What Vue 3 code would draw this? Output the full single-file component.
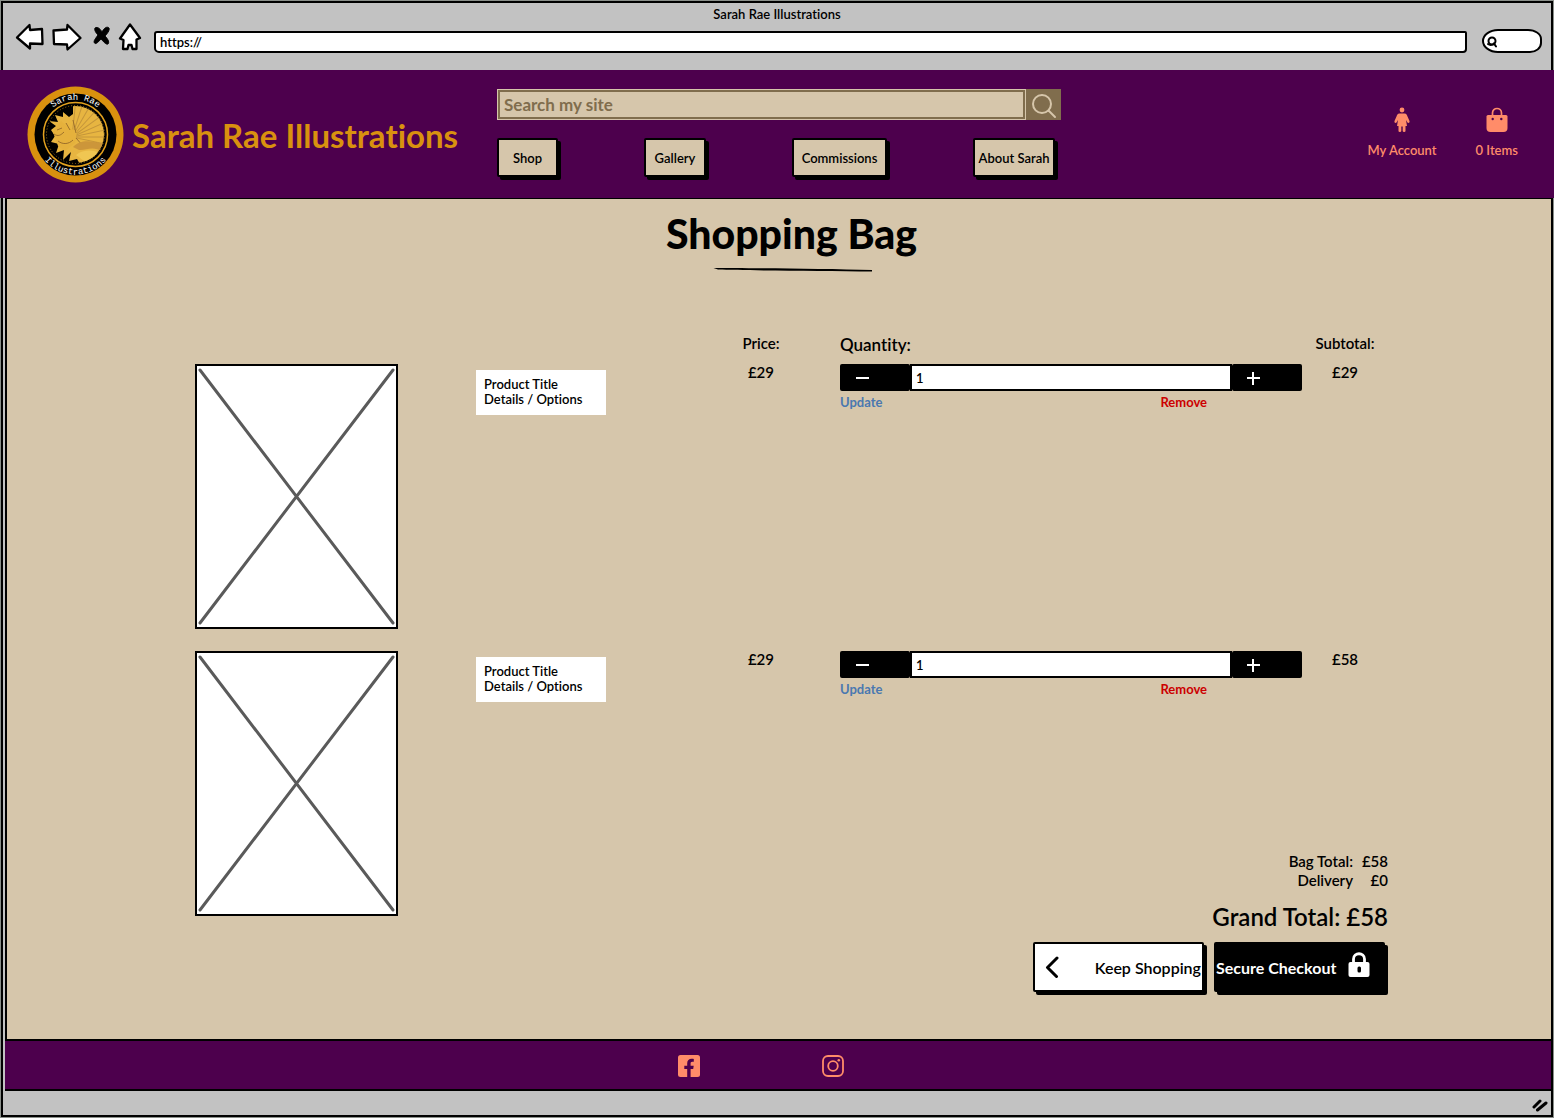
<script setup>
import { ref } from 'vue'

const links = [
  { label: 'Shop', width: 61 },
  { label: 'Gallery', width: 62 },
  { label: 'Commissions', width: 95 },
  { label: 'About Sarah', width: 82 }
]

const items = ref([
  { id: 1, price: '£29', quantity: 1, subtotal: '£29' },
  { id: 2, price: '£29', quantity: 1, subtotal: '£58' }
])

const feathers = [-84, -72, -60, -48, -36, -24, -12, 0, 12]
</script>

<template>
  <div class="window">
    <div class="chrome">
      <div class="tab-title">Sarah Rae Illustrations</div>
      <div class="toolbar">
        <svg class="controls" width="128" height="30" viewBox="0 0 128 30" aria-hidden="true">
          <g fill="#fff" stroke="#000" stroke-width="2.300" stroke-linejoin="round">
            <path d="M2 14.500 L14.500 2 L15 7 L27 6 L27.500 21 L15 20.500 L15 25.500 Z" />
            <path d="M38.500 7.500 L52 6.500 L52.500 2 L65.500 15 L52.500 26.500 L52 21.500 L39 21 Z" />
            <path d="M115 1.500 L125 15 L121.500 16.500 L121.500 26 L117.500 26 L116.500 22 L113.500 22 L112.500 26 L108 26 L108.500 17 L105 15.500 Z" />
          </g>
          <g fill="#000" stroke="#000" stroke-width="1" stroke-linejoin="round">
            <path d="M80 5 C83 3 86 7 87 9 C89 5 92 3 94 5 C95 7 92 11 90 13 C92 15 95 19 93 21 C91 22 88 18 86 16 C84 18 81 22 79.500 20 C78 18 81 15 83 12 C81 10 79 7 80 5 Z" />
          </g>
        </svg>
        <input class="address" type="text" value="https://" aria-label="Address" />
        <label class="finder">
          <svg width="12" height="14" viewBox="0 0 12 14" fill="none" stroke="#000" stroke-width="2" stroke-linecap="round" aria-hidden="true">
            <circle cx="6" cy="5" r="3.500" /><path d="M2 8 C4 9.500 7 9 8 7.500 L10 10.500" />
          </svg>
          <input type="text" aria-label="Browser search" />
        </label>
      </div>
    </div>

    <header class="site-header">
      <a class="brand" href="#">
        <svg width="97" height="97" viewBox="0 0 97 97" aria-hidden="true">
          <defs>
            <path id="arc-top" d="M13.500 48.500 A35 35 0 0 1 83.500 48.500" />
            <path id="arc-bottom" d="M8.500 48.500 A40 40 0 0 0 88.500 48.500" />
            <clipPath id="medal"><circle cx="48.500" cy="48.500" r="28.500" /></clipPath>
          </defs>
          <circle cx="48.500" cy="48.500" r="48" fill="#d9910f" />
          <circle cx="48.500" cy="48.500" r="41" fill="#000" />
          <circle cx="48.500" cy="48.500" r="32" fill="none" stroke="#e3a21e" stroke-width="1.500" />
          <circle cx="48.500" cy="48.500" r="29" fill="none" stroke="#a17618" stroke-width="1" stroke-dasharray="1 2" />
          <g clip-path="url(#medal)">
            <path d="M46 18 H80 V80 H54 L50 73 L42 75 L44 66 L36 74 L37 64 L29 67 L32 58 L24 56 L28 50 L24 44 L29 40 L22 35 L31 36 L28 29 L36 31 L36 26 L42 31 L46 28 L46 34 Z" fill="#e7b541" />
            <path v-for="angle in feathers" :key="angle" d="M45 51 L84 51" :transform="`rotate(${angle} 45 51)`" stroke="#c4953a" stroke-width="1" />
            <path d="M26 46 L34 35 L42 42 L50 45 L48 57 L38 65 L31 60 Z" fill="#e5b13c" />
            <path d="M27 48 C31 51 34 49 37 46 M30 44 L35 42 M31 55 C36 59 42 58 46 54 M39 37 L43 44 M46 34 L49 47 M49 52 L56 60 L70 57" fill="none" stroke="#9d702b" stroke-width="1" />
            <path d="M46 61 C55 52 66 56 78 58 L76 66 C65 59 59 65 52 64 Z" fill="#cc963a" />
            <path d="M49 69 C57 63 66 64 73 67 L61 78 Z" fill="#f0c652" />
          </g>
          <text class="seal"><textPath href="#arc-top" startOffset="50%" text-anchor="middle">Sarah Rae</textPath></text>
          <text class="seal"><textPath href="#arc-bottom" startOffset="50%" text-anchor="middle">Illustrations</textPath></text>
        </svg>
        <span>Sarah Rae Illustrations</span>
      </a>

      <div class="middle">
        <form class="search" role="search" @submit.prevent>
          <input type="search" placeholder="Search my site" aria-label="Search my site" />
          <button type="submit" aria-label="Search">
            <svg width="28" height="28" viewBox="0 0 28 28" fill="none" stroke="#d6c6ab" stroke-width="2" stroke-linecap="round" aria-hidden="true">
              <circle cx="12" cy="12" r="9" /><path d="M18.500 18.500 L25 25" />
            </svg>
          </button>
        </form>
        <nav>
          <button v-for="link in links" :key="link.label" type="button" :style="{ width: link.width + 'px' }">{{ link.label }}</button>
        </nav>
      </div>

      <div class="account">
        <a href="#">
          <svg width="24" height="26" viewBox="0 0 24 26" fill="#ff8c69" aria-hidden="true">
            <circle cx="12" cy="3" r="2.400" />
            <path d="M9.500 6.500 H14.500 C16.500 6.500 17 8 17.500 9.500 L19.500 14 C20 16 18 16.500 17.300 15.200 L16 13 L17 19 H15.500 V24 Q15.500 25 14.200 25 Q12.700 25 12.700 24 V19.500 H11.300 V24 Q11.300 25 9.800 25 Q8.500 25 8.500 24 V19 H7 L8 13 L6.700 15.200 C6 16.500 4 16 4.500 14 L6.500 9.500 C7 8 7.500 6.500 9.500 6.500 Z" />
          </svg>
          <span>My Account</span>
        </a>
        <a href="#">
          <svg width="24" height="26" viewBox="0 0 24 26" aria-hidden="true">
            <path d="M7.500 9 V6 C7.500 0 16.500 0 16.500 6 V9" fill="none" stroke="#ff8c69" stroke-width="1.700" />
            <path d="M3 8 H21 Q22.500 8 22.500 9.500 V21 Q22.500 25 18.500 25 H5.500 Q1.500 25 1.500 21 V9.500 Q1.500 8 3 8 Z" fill="#ff8c69" />
            <circle cx="7.700" cy="12" r="1.200" fill="#4d004d" /><circle cx="16.300" cy="12" r="1.200" fill="#4d004d" />
          </svg>
          <span>0 Items</span>
        </a>
      </div>
    </header>

    <main>
      <h1>Shopping Bag</h1>
      <svg class="rule" width="160" height="5" viewBox="0 0 160 5" aria-hidden="true">
        <path d="M1.500 1 C30 1 110 1.500 160 3 L160 4.500 C110 4 30 3.500 6 2.500 Z" />
      </svg>

      <table>
        <colgroup>
          <col class="c-image" /><col /><col class="c-price" /><col class="c-quantity" /><col class="c-subtotal" />
        </colgroup>
        <thead>
          <tr>
            <td></td>
            <td></td>
            <th scope="col">Price:</th>
            <th class="quantity" scope="col">Quantity:</th>
            <th scope="col">Subtotal:</th>
          </tr>
        </thead>
        <tbody>
          <tr v-for="item in items" :key="item.id">
            <td>
              <svg class="picture" width="203" height="265" viewBox="0 0 203 265" role="img" aria-label="Product image">
                <rect x="1" y="1" width="201" height="263" fill="#fff" stroke="#000" stroke-width="2" />
                <path d="M5 6 L198 259 M198 6 L5 259" stroke="#5a5a5a" stroke-width="3" stroke-linecap="round" />
              </svg>
            </td>
            <td><div class="product">Product Title<br />Details / Options</div></td>
            <td class="money">{{ item.price }}</td>
            <td class="quantity">
              <div class="stepper">
                <button type="button" aria-label="Decrease quantity">
                  <svg width="14" height="14" viewBox="0 0 14 14" stroke="#fff" stroke-width="2" aria-hidden="true"><path d="M1 7 H14" /></svg>
                </button>
                <input v-model="item.quantity" type="text" aria-label="Quantity" />
                <button type="button" aria-label="Increase quantity">
                  <svg width="14" height="14" viewBox="0 0 14 14" stroke="#fff" stroke-width="2" aria-hidden="true"><path d="M0 7 H13 M6 1 V14" /></svg>
                </button>
              </div>
              <div class="actions">
                <a class="update" href="#">Update</a>
                <a class="remove" href="#">Remove</a>
              </div>
            </td>
            <td class="money">{{ item.subtotal }}</td>
          </tr>
        </tbody>
      </table>

      <section class="totals">
        <dl>
          <div><dt>Bag Total:</dt><dd>£58</dd></div>
          <div><dt>Delivery</dt><dd>£0</dd></div>
        </dl>
        <p class="grand">Grand Total: £58</p>
        <div class="buttons">
          <button class="keep" type="button">
            <svg width="14" height="22" viewBox="0 0 14 22" fill="none" stroke="#000" stroke-width="3" stroke-linecap="round" stroke-linejoin="round" aria-hidden="true"><path d="M12 2 L2.500 11.500 L11.500 20.500" /></svg>
            <span>Keep Shopping</span>
          </button>
          <button class="checkout" type="button">
            <span>Secure Checkout</span>
            <svg width="22" height="26" viewBox="0 0 22 26" aria-hidden="true">
              <path d="M5.500 11 V7 C5.500 0 16.500 0 16.500 7 V11" fill="none" stroke="#fff" stroke-width="2.800" />
              <path d="M2.500 10 H19.500 Q21.500 10 21.500 12 V23 Q21.500 25 19.500 25 H2.500 Q0.500 25 0.500 23 V12 Q0.500 10 2.500 10 Z" fill="#fff" />
              <rect x="9.500" y="14.500" width="3.500" height="6" rx="1.500" fill="#000" />
            </svg>
          </button>
        </div>
      </section>
    </main>

    <footer>
      <a href="#" aria-label="Facebook">
        <svg width="22" height="22" viewBox="0 0 22 22" aria-hidden="true">
          <rect width="22" height="22" rx="2.500" fill="#ff8c69" />
          <path d="M9.200 22 V14 H6.300 V10.700 H9.200 V8.300 C9.200 5.200 11 3.700 13.600 3.700 C14.800 3.700 15.800 3.900 15.800 3.900 V6.700 H14.300 C13 6.700 12.600 7.500 12.600 8.400 V10.700 H15.700 L15.200 14 H12.600 V22 Z" fill="#4d004d" />
        </svg>
      </a>
      <a href="#" aria-label="Instagram">
        <svg width="22" height="22" viewBox="0 0 22 22" fill="none" stroke="#ff8c69" stroke-width="1.800" aria-hidden="true">
          <rect x="1" y="1" width="20" height="20" rx="5" /><circle cx="11" cy="11" r="4.800" />
          <circle cx="16.800" cy="5.200" r="1.300" fill="#ff8c69" stroke="none" />
        </svg>
      </a>
    </footer>

    <div class="status">
      <svg width="18" height="14" viewBox="0 0 18 14" stroke="#000" stroke-width="3" stroke-linecap="round" aria-hidden="true">
        <path d="M3 9 L9 3 M6.500 12 L15 5" />
      </svg>
    </div>
  </div>
</template>

<style>
body {
  background: #8a8f8a;
}
</style>

<style scoped>
* {
  box-sizing: border-box;
}

.window {
  margin: 1px;
  border: 2px solid #000;
  background: #c2c2c2;
  color: #000;
  font-family: Lato, "Noto Sans", sans-serif;
  font-size: 13px;
  font-weight: 600;
  font-variant-ligatures: none;
}

button,
input {
  font: inherit;
  font-variant-ligatures: none;
  color: inherit;
  border-radius: 0;
  outline: none;
}

button {
  padding: 0;
  cursor: pointer;
}

a {
  color: inherit;
  text-decoration: none;
}

svg {
  display: block;
  flex: none;
}

/* browser bar */
.chrome {
  height: 67px;
  padding-top: 3px;
}

.tab-title {
  line-height: 16px;
  text-align: center;
}

.toolbar {
  display: flex;
  padding: 1px 9px 0 12px;
}

.controls {
  margin-right: 11px;
}

.address {
  flex: 1;
  min-width: 0;
  height: 22px;
  margin-top: 8px;
  padding: 0 4px;
  border: 2px solid #000;
  border-radius: 3px 2px 4px 5px;
  background: #fff;
}

.finder {
  display: flex;
  width: 60px;
  height: 24px;
  margin: 6px 0 0 15px;
  padding: 5px 2px;
  border: 2px solid #000;
  border-radius: 16px 14px 12px 16px / 12px 10px 10px 12px;
  background: #fff;
}

.finder input {
  width: 38px;
  height: 12px;
  padding: 0;
  border: 0;
  background: none;
}

/* site header */
.site-header {
  display: flex;
  align-items: center;
  height: 128px;
  margin: 0 -3px;
  padding: 0 36px 0 27px;
  background: #4d004d;
}

.brand {
  display: flex;
  flex: 0 0 470px;
  align-items: center;
  gap: 8px;
  color: #d9910f;
  font-size: 33px;
  font-weight: 700;
  white-space: nowrap;
}

.brand span {
  padding-top: 2px;
}

.seal {
  fill: #fff;
  font: 9px "Liberation Mono", monospace;
}

.middle {
  flex: 0 1 564px;
  padding-bottom: 2px;
}

.search {
  display: flex;
  height: 31px;
}

.search input {
  flex: 1;
  min-width: 0;
  padding: 0 6px;
  border: 1px solid #d6c6ab;
  background: #d6c6ab;
  box-shadow: inset 0 0 0 2px #806d4d;
  font-size: 17px;
  font-weight: 700;
  appearance: none;
}

.search input::placeholder {
  color: #806d4d;
  opacity: 1;
}

.search button {
  width: 35px;
  padding: 3px 4px;
  border: 0;
  background: #806d4d;
}

nav {
  display: flex;
  justify-content: space-between;
  margin: 18px 6px 0 0;
}

nav button {
  height: 39px;
  border: 2px solid #000;
  border-radius: 2px;
  background: #d6c6ab;
  box-shadow: 3px 3px 0 #000;
  white-space: nowrap;
}

.account {
  display: flex;
  gap: 39px;
  margin-left: auto;
  padding-bottom: 4px;
  color: #ff8c69;
  line-height: 16px;
}

.account a {
  display: flex;
  flex-direction: column;
  align-items: center;
  gap: 9px;
}

/* bag */
main {
  margin-left: 2px;
  padding: 11px 163px 44px 188px;
  border: solid #000;
  border-width: 1px 0 2px 2px;
  background: #d6c6ab;
}

h1 {
  margin: 0;
  font-size: 41px;
  font-weight: 900;
  line-height: 48px;
  text-align: center;
}

.rule {
  margin: 9px auto 61px;
}

table {
  width: 100%;
  table-layout: fixed;
  border-spacing: 0;
}

.c-image {
  width: 281px;
}

.c-price {
  width: 80px;
}

.c-quantity {
  width: 42%;
}

.c-subtotal {
  width: 86px;
}

th,
td {
  padding: 0;
  vertical-align: top;
}

th {
  height: 31px;
  font-size: 15px;
  font-weight: 600;
  line-height: 20px;
  text-align: center;
}

th.quantity,
td.quantity {
  padding-left: 39px;
}

th.quantity {
  font-size: 17px;
  line-height: 24px;
  text-align: left;
}

tbody tr:not(:last-child) td {
  padding-bottom: 22px;
}

.product {
  width: 130px;
  margin-top: 6px;
  padding: 7px 8px 8px;
  background: #fff;
  line-height: 15px;
}

.money {
  font-size: 15px;
  line-height: 16px;
  text-align: center;
}

.stepper {
  display: flex;
  height: 27px;
}

.stepper button {
  width: 70px;
  padding-left: 15px;
  border: 0;
  border-radius: 2px;
  background: #000;
}

.stepper input {
  flex: 1;
  min-width: 0;
  padding: 0 4px;
  border: 2px solid #000;
  background: #fff;
}

.actions {
  display: flex;
  justify-content: space-between;
  padding: 3px 95px 0 0;
  font-weight: 700;
  line-height: 16px;
}

.update {
  color: #4a78b0;
}

.remove {
  color: #c00;
}

/* the totals sit beside the lower part of the last picture */
.totals {
  display: flex;
  flex-direction: column;
  align-items: flex-end;
  margin-top: -64px;
}

dl {
  margin: 0;
  font-size: 15px;
  line-height: 19px;
}

dl div {
  display: flex;
  justify-content: flex-end;
}

dd {
  min-width: 35px;
  margin: 0;
  text-align: right;
}

.grand {
  margin: 13px 0 11px;
  font-size: 24px;
  line-height: 28px;
}

.buttons {
  display: flex;
  gap: 10px;
  padding-right: 3px;
}

.buttons button {
  display: flex;
  align-items: center;
  justify-content: space-between;
  width: 171px;
  height: 50px;
  margin-bottom: 3px;
  border: 2px solid #000;
  border-radius: 2px;
  box-shadow: 3px 3px 0 #000;
  font-size: 16px;
  white-space: nowrap;
}

.keep {
  padding: 0 1px 0 10px;
  background: #fff;
}

.buttons .checkout {
  padding: 0 13px 0 0;
  background: #000;
  color: #fff;
  font-weight: 700;
}

.checkout svg {
  margin-bottom: 4px;
}

/* page foot */
footer {
  display: flex;
  align-items: center;
  justify-content: center;
  gap: 122px;
  height: 50px;
  margin-left: 2px;
  padding-top: 2px;
  padding-right: 34px;
  border-bottom: 2px solid #000;
  background: #4d004d;
}

.status {
  display: flex;
  justify-content: flex-end;
  height: 24px;
  padding: 7px 2px 0 0;
}
</style>
